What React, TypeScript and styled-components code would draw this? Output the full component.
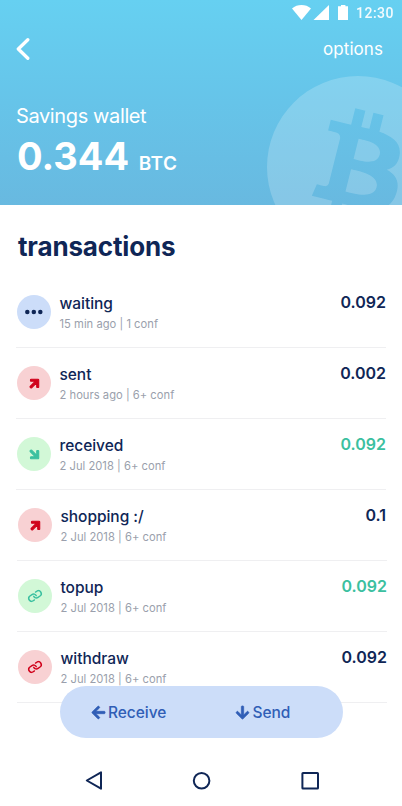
import React from 'react';
import styled, { createGlobalStyle } from 'styled-components';
import { FaArrowDown, FaArrowLeft, FaArrowRight } from 'react-icons/fa';
import { Link } from 'lucide-react';

const navy = '#0f2656';
const green = '#3bc0a0';
const red = '#d0021b';

const GlobalStyle = createGlobalStyle`
  * { box-sizing: border-box; }
  body { margin: 0; background: #fff; }
`;

const Screen = styled.main`
  width: 402px;
  height: 806px;
  overflow: hidden;
  background: #fff;
  color: ${navy};
  font-family: 'Inter', sans-serif;
`;

const Header = styled.header`
  position: relative;
  height: 205px;
  overflow: hidden;
  color: #fff;
  background: linear-gradient(180deg, #66d0f1 0%, #66c4e9 50%, #68b9e0 100%);
`;

const CoinMark = styled.svg`
  position: absolute;
  top: 70px;
  left: 262px;
  width: 140px;
  height: 135px;
`;

const StatusBar = styled.div`
  display: flex;
  height: 25px;
  padding-right: 8px;
  align-items: center;
  justify-content: flex-end;
`;

const StatusIcons = styled.svg`
  width: 56px;
  height: 15px;
  margin-right: 7.5px;
`;

const Clock = styled.time`
  padding-top: 1px;
  font: 500 14px/16px 'Roboto', sans-serif;
  letter-spacing: 0.5px;
  opacity: 0.92;
`;

const AppBar = styled.nav`
  display: flex;
  height: 48px;
  padding: 0 19px 0 16px;
  align-items: center;
  justify-content: space-between;
`;

const PlainButton = styled.button`
  display: flex;
  padding: 0;
  border: 0;
  background: none;
  color: inherit;
  font: 400 17px/20px 'Inter', sans-serif;
  letter-spacing: 0.07px;
`;

const Wallet = styled.div`
  margin: 31px 0 0 16px;
`;

const WalletName = styled.div`
  font-size: 20px;
  line-height: 24px;
  letter-spacing: -0.38px;
`;

const Balance = styled.div`
  display: flex;
  align-items: baseline;
  gap: 9.5px;
  margin: 5px 0 0 1px;
  font-size: 38px;
  font-weight: 700;
  line-height: 46px;
`;

const Unit = styled.span`
  font-size: 19px;
  font-weight: 600;
  letter-spacing: 0.4px;
`;

const Heading = styled.h1`
  margin: 0;
  padding: 26px 0 14px 18px;
  font-size: 26px;
  font-weight: 700;
  line-height: 32px;
  letter-spacing: -0.15px;
`;

const List = styled.ul`
  margin: 0;
  padding: 0;
  list-style: none;
`;

const Row = styled.li<{ $shift: number }>`
  display: flex;
  height: 71px;
  margin: 0 ${p => 16 - p.$shift}px 0 ${p => 16 + p.$shift}px;
  padding-left: 1px;
  align-items: flex-start;
  border-bottom: 1px solid #efeff1;
`;

const Badge = styled.span<{ $bg: string; $fg: string }>`
  display: flex;
  width: 34px;
  height: 34px;
  margin-top: 18px;
  align-items: center;
  justify-content: center;
  border-radius: 50%;
  background: ${p => p.$bg};
  color: ${p => p.$fg};
`;

const Turned = styled.span<{ $deg: number }>`
  display: flex;
  transform: rotate(${p => p.$deg}deg);
`;

const Details = styled.div`
  flex: 1;
  margin: 17px 0 0 8.5px;
`;

const Name = styled.div`
  font-size: 15.5px;
  font-weight: 500;
  line-height: 20px;
  letter-spacing: -0.04px;
`;

const Meta = styled.div`
  margin-top: 2px;
  color: #9a9fac;
  font-size: 11.2px;
  line-height: 16px;
  letter-spacing: 0.02px;
`;

const Amount = styled.div<{ $positive: boolean; $inset: number }>`
  margin: 15px ${p => p.$inset}px 0 0;
  color: ${p => (p.$positive ? green : navy)};
  font-size: 16px;
  font-weight: 600;
  line-height: 20px;
`;

const ActionBar = styled.div`
  position: relative;
  display: grid;
  grid-template-columns: 144.5px 1fr;
  width: 283px;
  height: 52px;
  margin: -17px 0 0 59.5px;
  padding-left: 31px;
  align-items: center;
  border-radius: 26px;
  background: #ccddf9;
`;

const Action = styled.button`
  display: flex;
  padding: 0;
  gap: 2.5px;
  align-items: center;
  border: 0;
  background: none;
  color: #305eb6;
  font: 500 15.5px/22px 'Inter', sans-serif;
  letter-spacing: -0.05px;

  svg {
    overflow: visible;
    stroke: currentColor;
    stroke-width: 24;
    stroke-linejoin: round;
  }
`;

const ActionLabel = styled.span`
  padding-top: 1px;
`;

const BoldArrow = styled(FaArrowRight)`
  overflow: visible;
  stroke: currentColor;
  stroke-width: 44;
  stroke-linejoin: round;
`;

const SystemNav = styled.nav`
  display: flex;
  padding: 32px 82px 0 84px;
  justify-content: space-between;

  svg {
    width: 20px;
    height: 22px;
    fill: none;
    stroke: ${navy};
    stroke-width: 2;
    stroke-linejoin: round;
  }
`;

type Kind = 'waiting' | 'out' | 'in' | 'linkIn' | 'linkOut';

const badgeColors: Record<Kind, [string, string]> = {
  waiting: ['#ccddf9', navy],
  out: ['#f8d1d3', red],
  in: ['#d2f8d7', green],
  linkIn: ['#d2f8d7', green],
  linkOut: ['#f8d1d3', red],
};

function BadgeIcon({ kind }: { kind: Kind }) {
  if (kind === 'waiting') {
    return (
      <svg width="18" height="6" viewBox="0 0 18 6" fill="currentColor">
        <circle cx="2.3" cy="3" r="2.25" />
        <circle cx="8.8" cy="3" r="2.25" />
        <circle cx="15.3" cy="3" r="2.25" />
      </svg>
    );
  }
  if (kind === 'out' || kind === 'in') {
    return (
      <Turned $deg={kind === 'out' ? -45 : 45}>
        <BoldArrow size={13} />
      </Turned>
    );
  }
  return (
    <Turned $deg={10}>
      <Link size={14} strokeWidth={2.5} />
    </Turned>
  );
}

const transactions: {
  name: string;
  meta: string;
  amount: string;
  kind: Kind;
  positive?: boolean;
  inset?: number;
}[] = [
  { name: 'waiting', meta: '15 min ago | 1 conf', amount: '0.092', kind: 'waiting' },
  { name: 'sent', meta: '2 hours ago | 6+ conf', amount: '0.002', kind: 'out' },
  { name: 'received', meta: '2 Jul 2018 | 6+ conf', amount: '0.092', kind: 'in', positive: true },
  { name: 'shopping :/', meta: '2 Jul 2018 | 6+ conf', amount: '0.1', kind: 'out', inset: 1 },
  { name: 'topup', meta: '2 Jul 2018 | 6+ conf', amount: '0.092', kind: 'linkIn', positive: true },
  { name: 'withdraw', meta: '2 Jul 2018 | 6+ conf', amount: '0.092', kind: 'linkOut' },
];

export default function App() {
  return (
    <Screen>
      <GlobalStyle />
      <Header>
        <CoinMark viewBox="262 70 140 135">
          <mask id="coin" maskUnits="userSpaceOnUse" x="262" y="70" width="140" height="135">
            <circle cx="358" cy="167" r="91" fill="#fff" />
            <g transform="translate(264.2 73.1) scale(5.84)">
              <path
                fill="#000"
                fillRule="evenodd"
                d="M23.189 14.02c.314-2.096-1.283-3.223-3.465-3.975l.708-2.84-1.728-.43-.69 2.765c-.454-.114-.92-.22-1.385-.326l.695-2.783L15.596 6l-.708 2.839c-.376-.086-.746-.17-1.104-.26l.002-.009-2.384-.595-.46 1.846s1.283.294 1.256.312c.7.175.826.638.805 1.006l-.806 3.235c.048.012.11.03.18.057l-.183-.045-1.13 4.532c-.086.212-.303.531-.793.41.018.025-1.256-.313-1.256-.313l-.858 1.978 2.25.561c.418.105.828.215 1.231.318l-.715 2.872 1.727.43.708-2.84c.472.127.93.245 1.378.357l-.706 2.828 1.728.43.715-2.866c2.948.558 5.164.333 6.097-2.333.752-2.146-.037-3.385-1.588-4.192 1.13-.26 1.98-1.003 2.207-2.538zm-3.95 5.538c-.533 2.147-4.148.986-5.32.695l.95-3.805c1.172.293 4.929.872 4.37 3.11zm.535-5.569c-.487 1.953-3.495.96-4.47.717l.86-3.45c.975.243 4.118.696 3.61 2.733z"
              />
            </g>
          </mask>
          <rect x="262" y="70" width="140" height="135" fill="#fff" fillOpacity="0.2" mask="url(#coin)" />
        </CoinMark>
        <StatusBar>
          <StatusIcons viewBox="0 0 56 15" fill="#fff">
            <path d="M0 3.4C5.4-1.1 13.6-1.1 19 3.4L9.5 15Z" />
            <path d="M37 0v15H21.5Z" />
            <path d="M49 0h4.4v1.3H56V15H46V1.3h3Z" />
          </StatusIcons>
          <Clock>12:30</Clock>
        </StatusBar>
        <AppBar>
          <PlainButton aria-label="Back">
            <svg width="14" height="24" viewBox="0 0 14 24" fill="none" stroke="#fff" strokeWidth="3.3" strokeLinecap="round" strokeLinejoin="round">
              <path d="M11.8 2.7 2.3 12l9.5 9.3" />
            </svg>
          </PlainButton>
          <PlainButton>options</PlainButton>
        </AppBar>
        <Wallet>
          <WalletName>Savings wallet</WalletName>
          <Balance>
            0.344 <Unit>BTC</Unit>
          </Balance>
        </Wallet>
      </Header>
      <Heading>transactions</Heading>
      <List>
        {transactions.map((t, i) => (
          <Row key={t.name} $shift={i > 2 ? 1 : 0}>
            <Badge $bg={badgeColors[t.kind][0]} $fg={badgeColors[t.kind][1]}>
              <BadgeIcon kind={t.kind} />
            </Badge>
            <Details>
              <Name>{t.name}</Name>
              <Meta>{t.meta}</Meta>
            </Details>
            <Amount $positive={!!t.positive} $inset={t.inset ?? 0}>
              {t.amount}
            </Amount>
          </Row>
        ))}
      </List>
      <ActionBar>
        <Action>
          <FaArrowLeft size={15} />
          <ActionLabel>Receive</ActionLabel>
        </Action>
        <Action>
          <FaArrowDown size={15} />
          <ActionLabel>Send</ActionLabel>
        </Action>
      </ActionBar>
      <SystemNav>
        <svg viewBox="0 0 20 22">
          <path d="M17 2.3v16.4L2.8 10.5Z" />
        </svg>
        <svg viewBox="0 0 20 22">
          <circle cx="9.6" cy="10.8" r="7.8" />
        </svg>
        <svg viewBox="0 0 20 22">
          <rect x="2.4" y="3" width="15.6" height="15.6" rx="0.6" />
        </svg>
      </SystemNav>
    </Screen>
  );
}
